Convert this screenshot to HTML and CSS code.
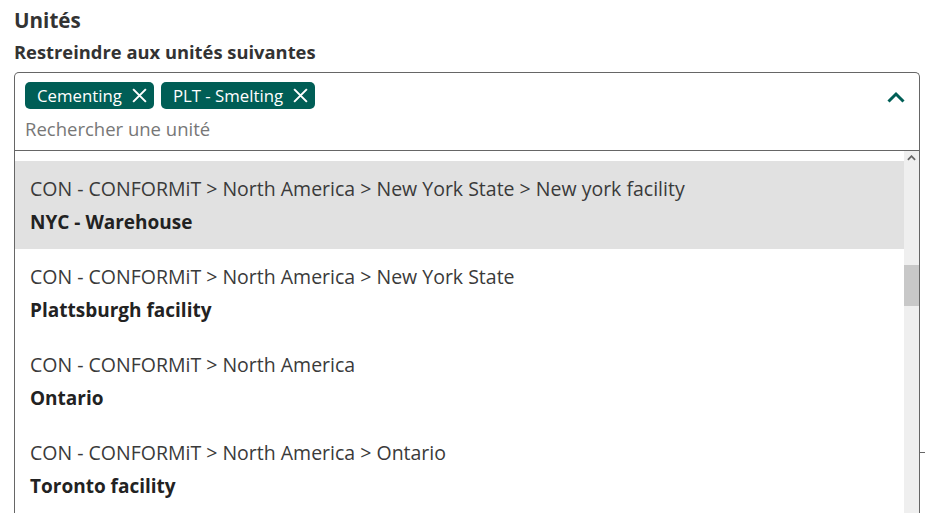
FILE: index.html
```html
<!DOCTYPE html>
<html lang="fr">
<head>
<meta charset="utf-8">
<title>Unités</title>
<link rel="stylesheet" href="styles.css">
</head>
<body>
<div class="page">
  <h2 class="title">Unités</h2>
  <div class="label">Restreindre aux unités suivantes</div>
  <div class="select">
    <div class="control">
      <div class="values">
        <div class="tags">
          <span class="tag">Cementing <svg class="x" viewBox="0 0 16 16"><path d="M2 2L14 14M14 2L2 14"/></svg></span>
          <span class="tag">PLT - Smelting <svg class="x" viewBox="0 0 16 16"><path d="M2 2L14 14M14 2L2 14"/></svg></span>
        </div>
        <div class="placeholder">Rechercher une unité</div>
      </div>
      <svg class="chev" viewBox="0 0 18 12"><path d="M1.5 10.5L9 3L16.5 10.5"/></svg>
    </div>
    <div class="menu">
      <div class="options">
        <div class="option active">
          <div class="path">CON - CONFORMiT &gt; North America &gt; New York State &gt; New york facility</div>
          <div class="name">NYC - Warehouse</div>
        </div>
        <div class="option">
          <div class="path">CON - CONFORMiT &gt; North America &gt; New York State</div>
          <div class="name">Plattsburgh facility</div>
        </div>
        <div class="option">
          <div class="path">CON - CONFORMiT &gt; North America</div>
          <div class="name">Ontario</div>
        </div>
        <div class="option">
          <div class="path">CON - CONFORMiT &gt; North America &gt; Ontario</div>
          <div class="name">Toronto facility</div>
        </div>
      </div>
      <div class="scrollbar">
        <svg class="sb-up" viewBox="0 0 10 6"><path d="M1 5L5 1L9 5"/></svg>
        <div class="thumb"></div>
      </div>
    </div>
    <span class="tick"></span>
  </div>
</div>
</body>
</html>
```

FILE: styles.css
```css
html, body {
  margin: 0;
  padding: 0;
  background: #fff;
  height: 100%;
  overflow: hidden;
}
body {
  font-family: "Open Sans", "Noto Sans", sans-serif;
  color: #333;
}
.page {
  padding: 5px 5px 0 14px;
}
.title {
  margin: 0;
  font-size: 20.6px;
  font-weight: 700;
  line-height: 30px;
  color: #333;
}
.label {
  font-size: 18.35px;
  font-weight: 700;
  line-height: 24px;
  margin-top: 5px;
  color: #333;
}
.select {
  position: relative;
  margin-top: 8px;
  border: 1px solid #666;
  border-bottom: none;
  border-radius: 5px 5px 0 0;
}
.control {
  display: flex;
  align-items: flex-start;
  padding: 9px 14px 0 10px;
  height: 68px;
  border-bottom: 1px solid #666;
}
.values {
  flex: 1;
}
.tags {
  display: flex;
  gap: 7px;
}
.tag {
  display: inline-flex;
  align-items: center;
  gap: 9px;
  height: 27px;
  padding: 0 6px 0 12px;
  background: #005e56;
  color: #fff;
  border-radius: 5px;
  font-size: 16.8px;
}
.x {
  width: 17px;
  height: 17px;
  stroke: #fff;
  stroke-width: 1.9;
  fill: none;
}
.placeholder {
  margin-top: 7px;
  font-size: 18.5px;
  line-height: 26px;
  color: #777;
}
.chev {
  width: 18px;
  height: 12px;
  margin-top: 9px;
  stroke: #005e56;
  stroke-width: 3;
  fill: none;
}
.menu {
  display: flex;
  height: 362px;
}
.options {
  flex: 1;
  padding-top: 10px;
}
.option {
  height: 88px;
  padding: 14px 0 0 15px;
  box-sizing: border-box;
}
.option.active {
  background: #e1e1e1;
}
.path {
  font-size: 19.5px;
  line-height: 28px;
  color: #3a3a3a;
}
.name {
  font-size: 19px;
  font-weight: 700;
  line-height: 28px;
  margin-top: 5px;
  color: #222;
}
.scrollbar {
  width: 15px;
  background: #efefef;
  display: flex;
  flex-direction: column;
  align-items: center;
}
.sb-up {
  width: 9px;
  height: 6px;
  margin-top: 4px;
  stroke: #666;
  stroke-width: 2;
  fill: none;
}
.thumb {
  width: 15px;
  height: 41px;
  margin-top: 104px;
  background: #c8c8c8;
}
.tick {
  position: absolute;
  right: -6px;
  top: 379px;
  width: 5px;
  height: 1px;
  background: #666;
}
```
